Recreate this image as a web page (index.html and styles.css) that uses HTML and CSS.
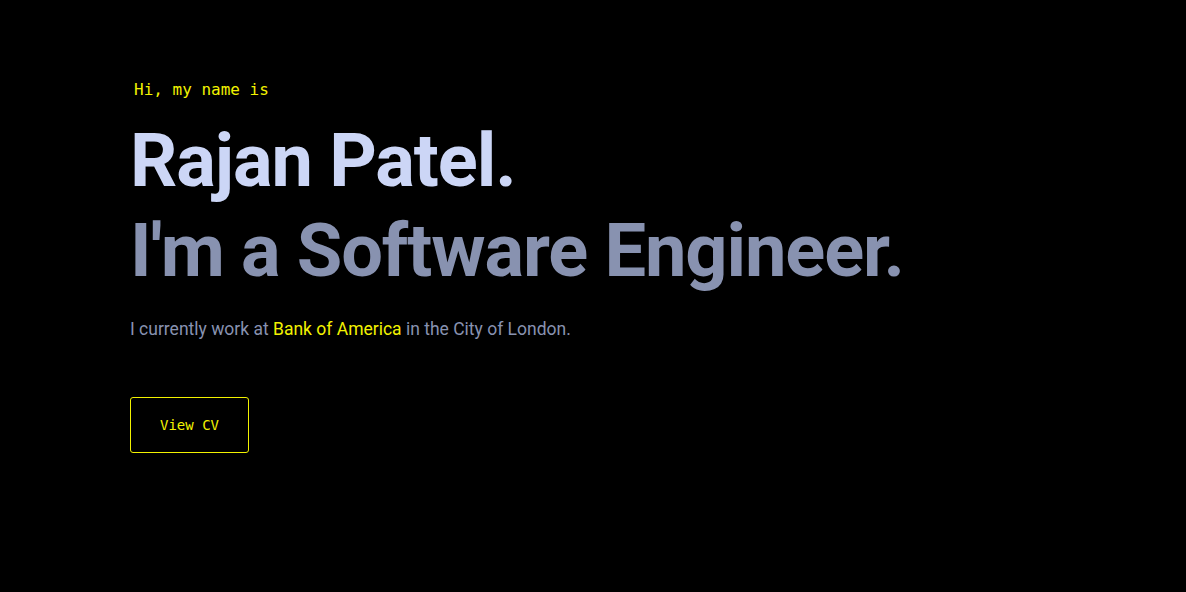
FILE: index.html
```html
<!DOCTYPE html>
<html>
<head>
<meta charset="utf-8">
<link rel="stylesheet" href="styles.css">
</head>
<body>
<main class="hero">
  <p class="greeting">Hi, my name is</p>
  <h1 class="name">Rajan Patel.</h1>
  <h2 class="tagline">I'm a Software Engineer.</h2>
  <p class="intro">I currently work at <span class="accent">Bank of America</span> in the City of London.</p>
  <a class="cv-button" href="#">View CV</a>
</main>
</body>
</html>
```
FILE: styles.css
```css
html, body {
  margin: 0;
  background: #000;
}
.hero {
  display: flex;
  flex-direction: column;
  align-items: flex-start;
  padding: 78px 0 0 130px;
  font-family: Roboto, "Liberation Sans", sans-serif;
}
.greeting {
  margin: 0 0 14px 4px;
  font-family: "DejaVu Sans Mono", monospace;
  font-size: 16px;
  line-height: 24px;
  color: #f2f200;
}
.name, .tagline {
  margin: 0;
  font-size: 74px;
  font-weight: 700;
  line-height: 90px;
  letter-spacing: -1.1px;
}
.name { color: #ccd6f6; }
.tagline { color: #8892b0; }
.intro {
  margin: 21px 0 0;
  font-size: 17.5px;
  line-height: 24px;
  color: #8892b0;
}
.accent { color: #f2f200; }
.cv-button {
  margin-top: 56px;
  display: flex;
  align-items: center;
  justify-content: center;
  width: 117px;
  height: 54px;
  box-sizing: content-box;
  border: 1px solid #f2f200;
  border-radius: 3px;
  color: #f2f200;
  font-family: "DejaVu Sans Mono", monospace;
  font-size: 14px;
  text-decoration: none;
}
```
